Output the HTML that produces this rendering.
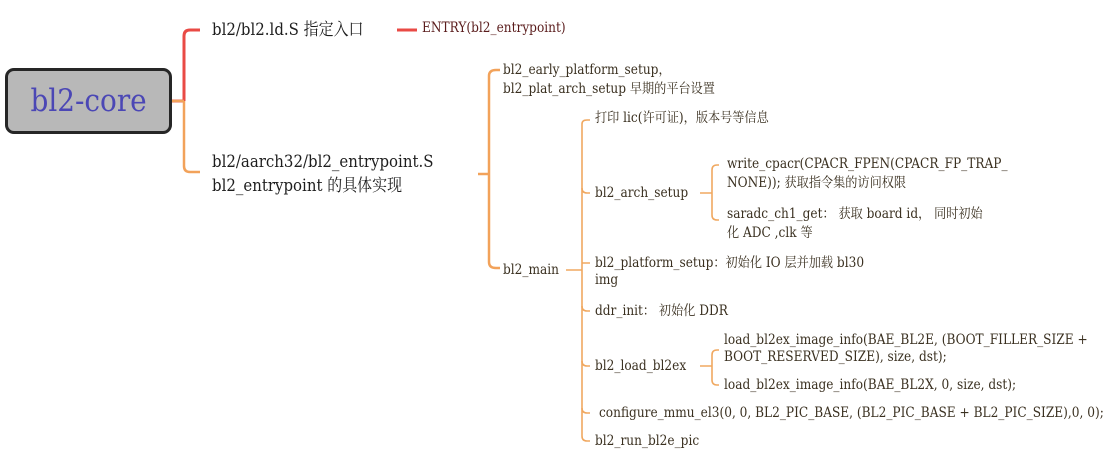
<!DOCTYPE html>
<html><head><meta charset="utf-8"><style>
html,body{margin:0;padding:0;width:1120px;height:457px;background:#fff;overflow:hidden;position:relative;font-family:"DejaVu Serif","Noto Serif CJK SC",serif;}
.t{position:absolute;white-space:nowrap;color:#2a2a2a;line-height:19px;transform-origin:0 50%;}
.b{font-size:17px;line-height:24px;color:#1e1e1e;transform:scaleX(0.88);}
.s{font-size:13.5px;line-height:19px;color:#3a3020;transform:scaleX(0.9);}
#root{position:absolute;left:5px;top:68px;width:161px;height:60px;border:3px solid #262626;border-radius:9px;background:#b8b8b8;color:#4b47b5;font-size:31px;text-align:center;line-height:60px;}
#root span{display:inline-block;transform:scaleX(0.9);}
</style></head><body>
<svg width="1120" height="457" style="position:absolute;left:0;top:0" fill="none">
<g stroke="#e94a45" stroke-width="3">
<path d="M172 101 H184 M184 101 V36 Q184 30 190 30 H200"/>
<path d="M397 30 H417"/>
</g>
<g stroke="#f2a25a" stroke-width="2.5">
<path d="M172 101 H184"/>
<path d="M184 101 V166 Q184 172 190 172 H200"/>
<path d="M478 174 H489 M489 76 Q489 70 496 70 H500 M489 76 V262 Q489 268 496 268 H500"/>
</g>
<g stroke="#f0a860" stroke-width="1.6">
<path d="M566 270 H582 M582 124 Q582 120 587 120 H590 M582 124 V436 Q582 441 587 441 H590"/>
<path d="M582 188 Q582 193 587 193 H590 M582 263 H590 M582 306 Q582 311 587 311 H590 M582 361 Q582 366 587 366 H590 M582 408 Q582 413 587 413 H590"/>
<path d="M700 193 H712 M712 170 Q712 165 717 165 H719 M712 170 V215 Q712 220 717 220 H719"/>
<path d="M700 366 H712 M712 355 Q712 350 717 350 H719 M712 355 V380 Q712 385 717 385 H719"/>
</g>
</svg>
<div id="root"><span>bl2-core</span></div>
<div class="t b" style="left:212px;top:18px">bl2/bl2.ld.S 指定入口</div>
<div class="t s" style="left:422px;top:19px;color:#5a1c1c">ENTRY(bl2_entrypoint)</div>
<div class="t b" style="left:212px;top:150px">bl2/aarch32/bl2_entrypoint.S</div>
<div class="t b" style="left:212px;top:174px">bl2_entrypoint 的具体实现</div>
<div class="t s" style="left:503px;top:61px">bl2_early_platform_setup，</div>
<div class="t s" style="left:503px;top:80px">bl2_plat_arch_setup 早期的平台设置</div>
<div class="t s" style="left:503px;top:261px">bl2_main</div>
<div class="t s" style="left:595px;top:109px">打印 lic(许可证)，版本号等信息</div>
<div class="t s" style="left:595px;top:184px">bl2_arch_setup</div>
<div class="t s" style="left:727px;top:155px">write_cpacr(CPACR_FPEN(CPACR_FP_TRAP_</div>
<div class="t s" style="left:727px;top:174px">NONE)); 获取指令集的访问权限</div>
<div class="t s" style="left:727px;top:205px">saradc_ch1_get： 获取 board id， 同时初始</div>
<div class="t s" style="left:727px;top:224px">化 ADC ,clk 等</div>
<div class="t s" style="left:595px;top:254px">bl2_platform_setup：初始化 IO 层并加载 bl30</div>
<div class="t s" style="left:595px;top:271px">img</div>
<div class="t s" style="left:595px;top:302px">ddr_init： 初始化 DDR</div>
<div class="t s" style="left:595px;top:357px">bl2_load_bl2ex</div>
<div class="t s" style="left:724px;top:331px">load_bl2ex_image_info(BAE_BL2E, (BOOT_FILLER_SIZE +</div>
<div class="t s" style="left:724px;top:348px">BOOT_RESERVED_SIZE), size, dst);</div>
<div class="t s" style="left:724px;top:376px">load_bl2ex_image_info(BAE_BL2X, 0, size, dst);</div>
<div class="t s" style="left:599px;top:404px">configure_mmu_el3(0, 0, BL2_PIC_BASE, (BL2_PIC_BASE + BL2_PIC_SIZE),0, 0);</div>
<div class="t s" style="left:595px;top:432px">bl2_run_bl2e_pic</div>
</body></html>
